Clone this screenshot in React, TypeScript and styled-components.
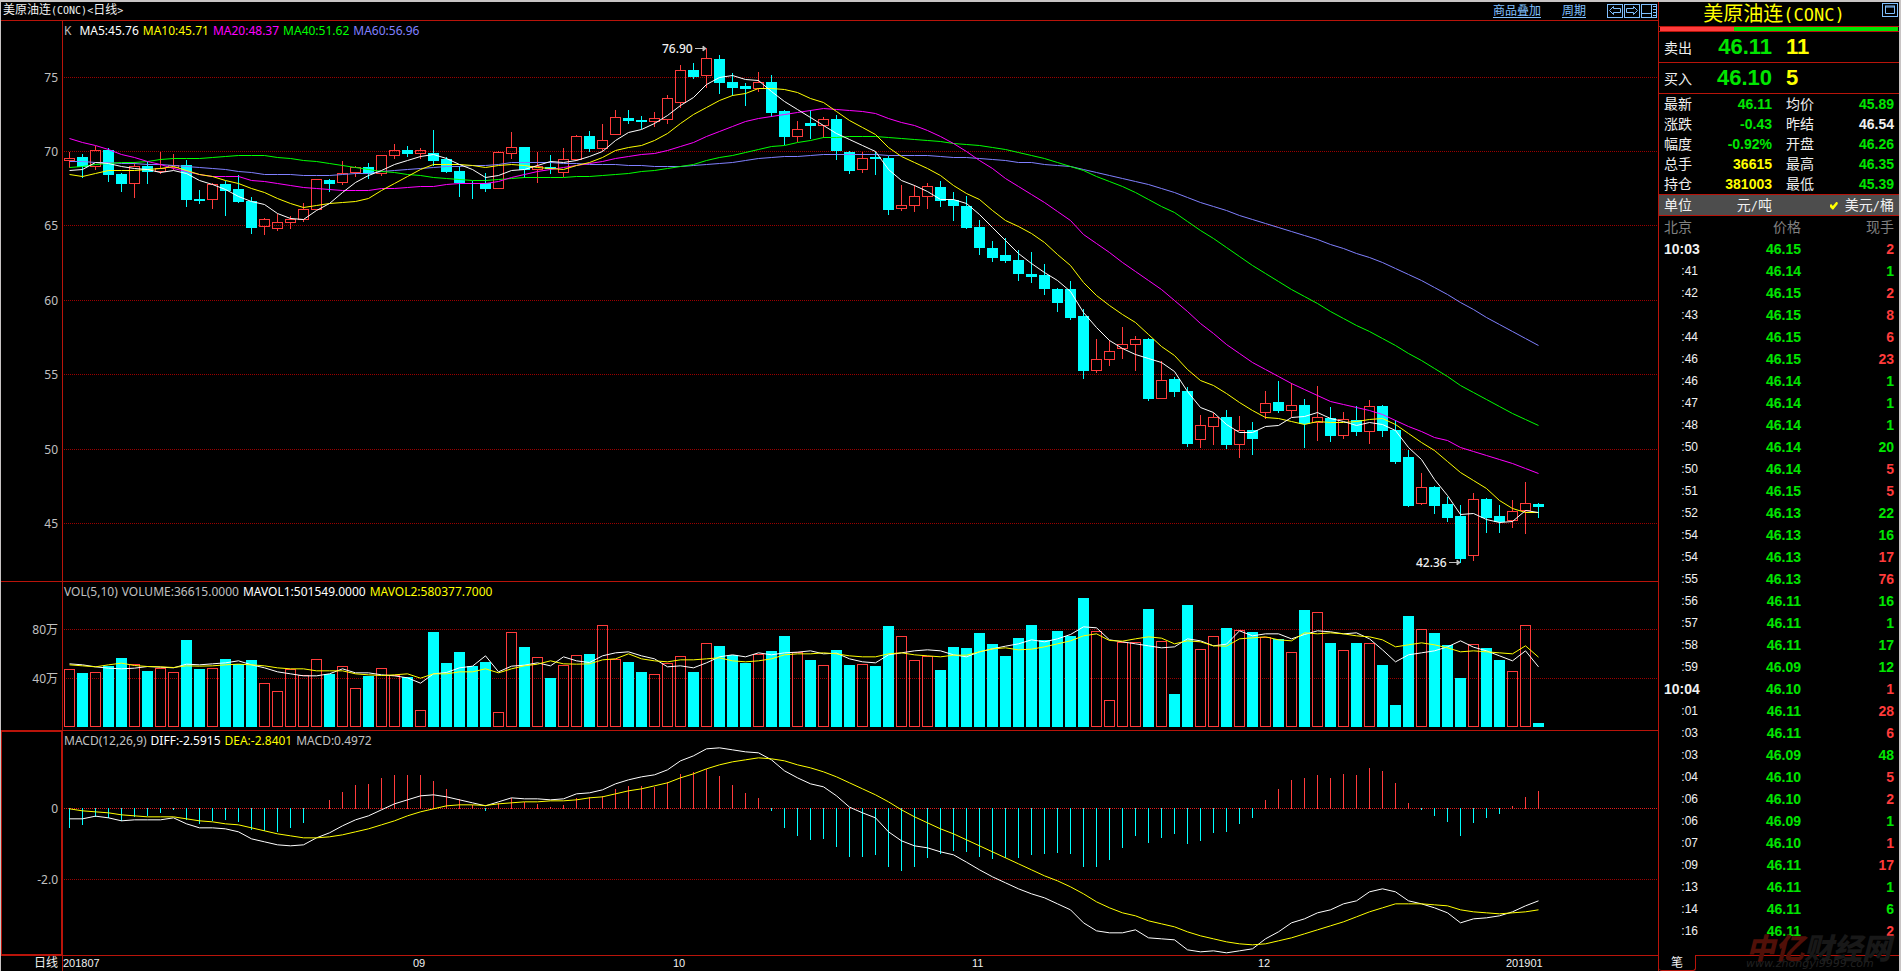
import React from "react";
import styled, { createGlobalStyle, css } from "styled-components";

const COLOR = {
  frame: "#c8c4c4",
  rule: "#b9140a",
  up: "#ff3b3b",
  down: "#00ffff",
  green: "#00e600",
  yellow: "#ffff00",
  white: "#f0f0f0",
  grey: "#c0c0c0",
  dim: "#808080",
  link: "#80c0ff",
  magenta: "#ff00ff",
  violet: "#8080ff",
  lime: "#00ff00",
};

const CJK = `"Noto Sans CJK SC", sans-serif`;
const LEGEND_FONT = `"Noto Sans", ${CJK}`;
const UI_FONT = `"Liberation Sans", ${CJK}`;

const GlobalStyle = createGlobalStyle`
  * { box-sizing: border-box; }
  body { margin: 0; background: #000; color: ${COLOR.white}; font-family: ${UI_FONT}; font-size: 12px; }
  button { margin: 0; padding: 0; border: 0; background: none; color: inherit; font: inherit; cursor: pointer; }
`;

/* ---------- chart data ---------- */

const STEP = 13;
const FIRST = 6;
const BODY = 11;

/* rising flag, high, body top, body bottom, low */
type Candle = [number, number, number, number, number];
const candles: Candle[] = [
  [1,152,158,160,167],[0,154,157,166,177],[1,146,150,166,169],[0,148,150,174,181],[0,173,174,183,191],
  [1,162,166,183,197],[0,162,166,171,183],[1,152,168,171,173],[1,154,165,167,169],[0,160,165,199,206],
  [0,190,199,200,203],[1,183,184,199,208],[0,181,184,190,215],[0,175,189,201,202],[0,197,201,227,233],
  [1,218,219,226,234],[1,214,222,228,230],[1,216,219,222,228],[1,203,209,219,221],[1,179,179,209,209],
  [0,179,180,183,191],[1,161,173,182,184],[1,166,167,172,176],[0,163,167,173,178],[1,155,155,173,175],
  [1,144,150,155,158],[0,146,150,153,156],[1,148,150,153,158],[0,130,153,160,165],[0,157,159,171,172],
  [0,166,171,182,196],[0,181,183,183,198],[0,173,183,188,191],[1,151,152,188,188],[1,132,147,153,158],
  [0,147,147,169,177],[1,152,166,169,182],[0,155,167,168,173],[1,148,159,172,176],[1,135,136,159,160],
  [0,131,136,148,151],[1,124,140,148,150],[1,110,117,134,134],[0,110,118,120,123],[0,116,120,121,128],
  [1,112,118,121,126],[1,95,98,119,123],[1,65,70,102,107],[0,63,70,76,78],[1,48,58,75,87],
  [0,55,59,82,93],[0,73,82,87,95],[0,83,86,88,105],[1,72,82,88,91],[0,75,82,112,116],
  [0,110,111,136,144],[1,121,129,136,141],[0,110,123,125,138],[1,117,119,125,137],[0,115,119,150,159],
  [0,151,152,170,173],[1,152,158,169,172],[0,152,157,158,174],[0,156,158,209,214],[1,185,205,208,210],
  [1,185,196,205,211],[1,183,186,196,208],[0,181,187,200,206],[0,192,200,205,220],[0,196,206,227,228],
  [0,220,227,247,254],[0,241,248,257,261],[0,238,255,260,262],[0,250,260,273,280],[0,252,274,276,282],
  [0,264,275,288,294],[0,288,289,302,311],[0,281,289,317,319],[0,309,316,370,378],[1,339,359,370,372],
  [1,340,351,359,365],[1,327,344,348,358],[1,336,339,344,370],[0,338,339,398,400],[1,361,380,398,398],
  [0,377,379,391,396],[0,387,391,443,446],[1,415,425,439,447],[1,413,417,426,444],[0,410,417,444,448],
  [1,416,430,444,457],[0,422,430,438,454],[1,391,403,412,418],[0,381,402,410,412],[1,383,405,410,416],
  [0,399,405,423,447],[1,386,417,422,440],[0,407,418,435,441],[1,412,419,435,438],[0,406,420,431,435],
  [1,400,406,431,443],[0,405,406,430,436],[0,420,430,461,463],[0,450,457,505,506],[1,473,487,503,504],
  [0,486,487,505,513],[0,497,504,517,521],[0,505,516,558,562],[1,493,499,555,560],[0,498,499,517,532],
  [0,505,516,521,532],[1,500,511,520,527],[1,482,503,510,533],[0,503,504,506,517],
];

const ma5 = [170,169,162,163,166,168,169,172,170,173,180,184,189,196,201,204,213,218,219,210,203,192,182,175,170,164,160,156,154,158,164,169,177,175,170,169,165,161,162,160,156,151,140,132,129,123,115,105,97,84,77,75,79,80,91,101,109,117,125,133,139,145,151,169,180,185,191,199,199,203,214,227,240,253,263,272,280,291,312,327,340,348,354,358,362,371,391,407,412,424,432,432,426,425,417,416,412,418,421,425,422,424,430,447,459,479,495,514,513,519,522,521,510,512];
const ma10 = [174,176,173,170,170,170,169,168,166,170,174,176,180,183,188,192,198,203,207,205,203,202,201,198,190,183,176,169,164,164,164,165,167,165,164,165,167,168,169,165,162,157,150,147,145,140,133,123,114,107,100,95,93,88,88,89,92,98,102,111,120,127,134,147,156,162,168,175,185,193,199,210,220,226,233,242,254,265,282,295,305,314,322,334,346,355,369,380,385,393,402,410,417,418,421,424,421,422,422,421,419,418,424,433,442,450,461,472,480,488,500,508,512,512];
const ma20 = [138,142,145,149,154,157,161,164,168,171,174,176,176,176,180,181,183,185,187,188,189,190,190,190,188,188,187,186,186,184,183,183,183,181,177,174,171,169,167,165,163,161,158,156,154,153,150,146,142,136,131,126,121,118,116,114,112,110,108,109,110,111,113,118,122,125,130,136,143,151,160,168,178,186,194,202,211,220,234,243,252,262,271,280,289,300,311,323,333,344,353,362,369,376,383,389,395,401,404,407,410,414,420,426,431,437,440,447,451,455,459,463,468,473];
const ma40 = [167,166,164,163,162,162,161,159,158,158,158,157,156,155,155,155,157,158,160,161,163,165,167,169,171,172,174,175,177,178,179,180,180,179,178,177,177,177,177,176,176,175,174,173,171,170,168,166,164,160,157,155,152,149,146,145,142,140,137,137,136,136,136,137,138,139,140,141,143,144,145,147,149,152,155,158,162,166,170,176,181,186,192,199,206,212,221,230,238,247,256,265,273,281,289,296,303,311,318,325,331,338,345,353,360,368,376,385,392,399,406,413,419,425];
const ma60 = [161,161,162,162,163,163,164,164,165,166,167,168,169,171,172,174,174,174,175,175,175,174,173,173,171,170,169,168,167,166,166,165,165,164,162,162,162,162,163,163,164,164,164,165,165,166,166,166,165,164,163,162,160,158,157,156,156,155,154,154,154,154,154,155,155,155,155,156,157,157,158,159,160,162,162,164,165,166,169,172,175,178,181,184,188,192,197,202,206,210,215,219,223,227,231,235,239,244,248,253,257,262,268,274,280,287,294,302,309,317,324,331,338,345];

/* volume and MACD series are sampled at three units per pixel */
const UNIT = 3;
const volume = [298,309,307,288,264,282,303,295,307,210,297,295,267,283,270,340,364,298,316,268,312,289,355,318,295,316,323,421,186,279,246,288,276,427,187,231,262,324,286,256,252,166,267,276,306,313,280,259,306,220,228,256,279,253,243,198,246,270,286,240,285,283,288,168,199,271,259,300,231,234,189,222,258,204,165,210,183,198,84,184,391,217,217,117,214,372,105,238,199,174,181,186,203,207,247,120,127,219,241,219,220,285,405,138,178,189,225,324,223,234,270,304,166,459];
const mavol1 = [280,283,289,293,295,293,288,290,292,281,283,280,277,271,283,292,304,310,316,316,310,295,307,307,313,316,322,338,310,306,292,287,256,304,287,284,277,286,259,271,276,256,247,244,256,265,289,286,292,277,259,253,259,247,253,247,245,241,250,248,265,274,277,253,247,241,238,241,253,259,244,235,227,220,208,214,205,192,169,172,208,214,220,226,232,229,205,211,226,221,181,196,190,190,205,192,181,184,190,187,205,238,274,253,247,241,229,211,230,241,256,271,241,289];
const mavol2 = [283,286,289,283,278,285,288,289,291,286,287,286,283,281,283,286,292,295,295,301,301,301,310,313,315,313,310,323,310,310,304,304,295,307,295,286,281,271,280,281,280,268,265,250,265,271,274,268,268,265,262,271,274,271,265,253,250,250,247,250,256,259,259,250,247,253,256,259,254,254,244,235,232,238,236,229,220,211,196,190,210,212,205,199,203,220,211,214,226,227,205,202,199,208,211,187,190,187,190,196,199,208,229,223,217,223,232,244,241,244,247,250,226,260];
const macd = [773,762,738,743,752,738,735,726,717,747,759,750,747,753,777,780,783,773,756,715,690,666,645,642,624,615,615,615,633,657,688,705,720,700,684,696,702,711,705,684,681,678,657,648,648,651,636,612,606,597,618,645,669,684,720,771,795,807,804,828,858,858,852,888,900,888,861,849,840,843,858,864,861,861,852,849,846,849,888,888,867,831,795,816,801,789,819,810,786,783,759,741,690,657,630,624,615,624,612,615,594,603,639,699,717,735,753,795,756,741,729,708,681,663];
const diff = [745,745,737,742,751,748,748,748,742,760,772,772,775,784,805,814,823,826,823,802,787,766,748,736,718,700,688,676,673,679,688,697,706,694,682,685,685,688,685,670,667,658,640,628,619,613,598,571,556,535,532,538,544,547,568,601,622,640,649,676,710,727,742,784,811,826,832,844,853,875,898,919,937,955,970,982,1000,1018,1057,1081,1087,1087,1078,1102,1105,1108,1138,1144,1141,1147,1141,1135,1105,1084,1057,1045,1027,1018,1000,991,964,955,964,991,1000,1012,1027,1057,1045,1042,1036,1024,1006,991];
const dea = [715,721,724,727,733,736,739,739,739,745,751,754,760,763,772,781,790,796,802,802,799,793,784,775,763,751,736,724,715,706,703,703,705,700,697,694,694,691,691,688,682,679,670,661,655,646,637,622,610,595,583,574,568,562,565,571,583,592,604,619,637,655,673,694,718,739,757,775,790,808,826,844,862,880,898,916,931,949,970,994,1012,1027,1036,1051,1060,1069,1084,1096,1105,1114,1120,1123,1120,1111,1102,1090,1078,1066,1054,1039,1024,1012,1000,1000,1000,1003,1006,1018,1024,1027,1030,1027,1024,1018];

const centre = (i: number) => FIRST + STEP * i;

/* ---------- frame ---------- */

const Page = styled.div`
  display: flex;
  min-height: 100vh;
  border: solid ${COLOR.frame};
  border-width: 2px 2px 0 1px;
  background: #000;
`;

const ChartArea = styled.main`
  flex: 1;
  min-width: 0;
  display: flex;
  flex-direction: column;
`;

const TopBar = styled.header`
  display: flex;
  align-items: center;
  height: 19px;
  padding: 0 1px 1px 2px;
  border-bottom: 1px solid ${COLOR.rule};
`;

const ChartTitle = styled.h1`
  flex: 1;
  margin: 0;
  font: 400 12px/16px ${UI_FONT};
  color: ${COLOR.white};
`;

const Latin = styled.span<{ $size: number }>`
  font-family: "DejaVu Sans Mono", monospace;
  font-size: ${(p) => p.$size}px;
`;

const TopLink = styled.a`
  margin-right: 21px;
  color: ${COLOR.link};
  line-height: 14px;
  text-decoration: underline;
  text-underline-offset: 2px;
`;

const IconGroup = styled.div`
  display: flex;
  gap: 1px;
`;

const IconButton = styled.button`
  display: block;
  width: 16px;
  height: 14px;
  color: ${COLOR.link};
  svg { display: block; }
`;

/* ---------- panels ---------- */

const Panel = styled.section<{ $grow?: boolean }>`
  display: flex;
  flex: ${(p) => (p.$grow ? "1 0 auto" : "none")};
  border-bottom: 1px solid ${COLOR.rule};
`;

const AxisColumn = styled.div<{ $active?: boolean }>`
  width: 62px;
  flex: none;
  border-right: 1px solid ${COLOR.rule};
  ${(p) =>
    p.$active &&
    css`
      box-shadow: inset 0 0 0 1px ${COLOR.rule};
    `}
`;

const Plot = styled.div`
  flex: 1;
  min-width: 0;
  display: grid;
  > * { grid-area: 1 / 1; }
`;

const Legend = styled.div`
  align-self: start;
  display: flex;
  gap: 4px;
  padding-left: 1px;
  font: 400 12px/20px ${LEGEND_FONT};
  white-space: nowrap;
`;

const LegendItem = styled.span<{ $color?: string; $wide?: boolean }>`
  color: ${(p) => p.$color ?? COLOR.grey};
  margin-right: ${(p) => (p.$wide ? 4 : 0)}px;
`;

const Drawing = styled.svg<{ $height: number }>`
  display: block;
  width: 100%;
  height: ${(p) => p.$height}px;
`;

const TimeBar = styled.footer`
  display: flex;
  height: 15px;
  flex: none;
`;

const PeriodLabel = styled.div`
  width: 62px;
  flex: none;
  padding-right: 4px;
  border-right: 1px solid ${COLOR.rule};
  text-align: right;
  line-height: 15px;
`;

const TimeDrawing = styled(Drawing)`
  flex: 1;
  font: 11px ${UI_FONT};
`;

type Label = { y: number; text: string };

function Axis({ height, labels, active }: { height: number; labels: Label[]; active?: boolean }) {
  return (
    <AxisColumn $active={active}>
      <Drawing $height={height} fontFamily={LEGEND_FONT} fontSize={12} fill={COLOR.grey} textAnchor="end">
        {labels.map((l) => (
          <text key={l.text} x={57} y={l.y + 5}>
            {l.text}
          </text>
        ))}
      </Drawing>
    </AxisColumn>
  );
}

function GridLine({ y, bright }: { y: number; bright?: boolean }) {
  return (
    <line x1={1} x2="100%" y1={y + 0.5} y2={y + 0.5} stroke={bright ? "#e01c1c" : "#9c0000"} strokeDasharray="1 1" />
  );
}

function Curve({ values, color, top, unit = 1 }: { values: number[]; color: string; top: number; unit?: number }) {
  const points = values.map((v, i) => `${centre(i) + 0.5},${v / unit - top + 0.5}`).join(" ");
  return <polyline points={points} fill="none" stroke={color} strokeWidth={1} />;
}

function Bar({ i, top, bottom, rising }: { i: number; top: number; bottom: number; rising: boolean }) {
  const left = centre(i) - 5;
  return rising ? (
    <rect x={left + 0.5} y={top + 0.5} width={BODY - 1} height={Math.max(bottom - top, 1)} fill="none" stroke={COLOR.up} />
  ) : (
    <rect x={left} y={top} width={BODY} height={bottom - top + 1} fill={COLOR.down} />
  );
}

function PricePanel() {
  const top = 21;
  const levels = [77, 151, 225, 300, 374, 449, 523];
  return (
    <Panel>
      <Axis height={560} labels={levels.map((y, k) => ({ y: y - top, text: String(75 - 5 * k) }))} />
      <Plot>
        <Drawing $height={560} aria-label="K">
          {levels.map((y) => (
            <GridLine key={y} y={y - top} />
          ))}
          {candles.map(([rising, high, open, close, low], i) => (
            <g key={i} fill={rising ? COLOR.up : COLOR.down}>
              <rect x={centre(i)} y={high - top} width={1} height={open - high} />
              <rect x={centre(i)} y={close - top} width={1} height={low - close + 1} />
              <Bar i={i} top={open - top} bottom={close - top} rising={rising === 1} />
            </g>
          ))}
          <Curve values={ma60} color={COLOR.violet} top={top} />
          <Curve values={ma40} color={COLOR.lime} top={top} />
          <Curve values={ma20} color={COLOR.magenta} top={top} />
          <Curve values={ma10} color={COLOR.yellow} top={top} />
          <Curve values={ma5} color="#ffffff" top={top} />
          <g fontFamily={LEGEND_FONT} fontSize={12} fontWeight={500} fill={COLOR.white}>
            <text x={599} y={32}>76.90</text>
            <text x={1353} y={546}>42.36</text>
          </g>
          <path d="M632 27.5H643M640 25V30L643 27.5ZM1386 541.5H1397M1394 539V544L1397 541.5Z" stroke={COLOR.grey} fill={COLOR.grey} />
        </Drawing>
        <Legend>
          <LegendItem $wide>K</LegendItem>
          <LegendItem $color="#ffffff">MA5:45.76</LegendItem>
          <LegendItem $color={COLOR.yellow}>MA10:45.71</LegendItem>
          <LegendItem $color={COLOR.magenta}>MA20:48.37</LegendItem>
          <LegendItem $color={COLOR.lime}>MA40:51.62</LegendItem>
          <LegendItem $color={COLOR.violet}>MA60:56.96</LegendItem>
        </Legend>
      </Plot>
    </Panel>
  );
}

function VolumePanel() {
  const top = 12;
  return (
    <Panel>
      <Axis
        height={148}
        labels={[
          { y: 47, text: "80万" },
          { y: 96, text: "40万" },
        ]}
      />
      <Plot>
        <Drawing $height={148} aria-label="VOL">
          <GridLine y={47} />
          <GridLine y={96} />
          {volume.map((v, i) => (
            <Bar key={i} i={i} top={Math.floor(v / UNIT) - top} bottom={144} rising={candles[i][0] === 1} />
          ))}
          <Curve values={mavol1} color="#ffffff" top={top} unit={UNIT} />
          <Curve values={mavol2} color={COLOR.yellow} top={top} unit={UNIT} />
        </Drawing>
        <Legend>
          <LegendItem>VOL(5,10)</LegendItem>
          <LegendItem>VOLUME:36615.0000</LegendItem>
          <LegendItem $color="#ffffff">MAVOL1:501549.0000</LegendItem>
          <LegendItem $color={COLOR.yellow}>MAVOL2:580377.7000</LegendItem>
        </Legend>
      </Plot>
    </Panel>
  );
}

function MacdPanel() {
  const top = 161;
  const zero = 77;
  return (
    <Panel $grow>
      <Axis
        active
        height={224}
        labels={[
          { y: zero, text: "0" },
          { y: 148, text: "-2.0" },
        ]}
      />
      <Plot>
        <Drawing $height={224} aria-label="MACD">
          <GridLine y={zero} bright />
          <GridLine y={148} />
          {macd.map((v, i) => {
            const tip = Math.floor(v / UNIT) - top;
            if (v === 715) return null;
            return v < 715 ? (
              <rect key={i} x={centre(i)} y={tip} width={1} height={zero - tip + 1} fill={COLOR.up} />
            ) : (
              <rect key={i} x={centre(i)} y={zero} width={1} height={tip - zero + 1} fill={COLOR.down} />
            );
          })}
          <Curve values={diff} color="#ffffff" top={top} unit={UNIT} />
          <Curve values={dea} color={COLOR.yellow} top={top} unit={UNIT} />
        </Drawing>
        <Legend>
          <LegendItem>MACD(12,26,9)</LegendItem>
          <LegendItem $color="#ffffff">DIFF:-2.5915</LegendItem>
          <LegendItem $color={COLOR.yellow}>DEA:-2.8401</LegendItem>
          <LegendItem>MACD:0.4972</LegendItem>
        </Legend>
      </Plot>
    </Panel>
  );
}

/* ---------- quote side bar ---------- */

const SideBar = styled.aside`
  position: relative;
  width: 241px;
  flex: none;
  display: flex;
  flex-direction: column;
  border-left: 1px solid ${COLOR.rule};
  font-size: 14px;
`;

const SideTitle = styled.div`
  position: relative;
  height: 25px;
  border-bottom: 1px solid ${COLOR.rule};
`;

const Instrument = styled.h2`
  margin: 0;
  padding-right: 10px;
  text-align: center;
  font: 400 20px/24px ${UI_FONT};
  color: ${COLOR.yellow};
  white-space: nowrap;
`;

const WindowButton = styled(IconButton)`
  position: absolute;
  top: 1px;
  right: 1px;
`;

const Balance = styled.div`
  display: flex;
  height: 5px;
  padding: 0 1px;
  border-bottom: 1px solid ${COLOR.rule};
`;

const BalancePart = styled.div<{ $share: number; $color: string }>`
  flex: ${(p) => p.$share};
  background: ${(p) => p.$color};
`;

const Offer = styled.div`
  display: grid;
  grid-template-columns: 28px 80px 1fr;
  align-items: center;
  height: 31px;
  padding: 0 5px;
  border-bottom: 1px solid ${COLOR.rule};
`;

const OfferPrice = styled.strong`
  text-align: right;
  font-size: 22px;
  line-height: 30px;
  color: ${COLOR.green};
`;

const OfferLots = styled(OfferPrice)`
  padding-left: 14px;
  text-align: left;
  color: ${COLOR.yellow};
`;

const StatTable = styled.table`
  width: 100%;
  border-collapse: collapse;
  table-layout: fixed;
  border-bottom: 1px solid ${COLOR.rule};
`;

const StatName = styled.th<{ $second?: boolean }>`
  width: ${(p) => (p.$second ? 42 : 33)}px;
  height: 20px;
  padding: 0 0 0 ${(p) => (p.$second ? 14 : 5)}px;
  text-align: left;
  font-weight: 400;
  line-height: 20px;
`;

const StatValue = styled.td<{ $color: string; $last?: boolean }>`
  padding: 0 ${(p) => (p.$last ? 5 : 0)}px 0 0;
  width: ${(p) => (p.$last ? "auto" : "80px")};
  text-align: right;
  font-weight: 700;
  line-height: 20px;
  color: ${(p) => p.$color};
`;

const UnitBar = styled.fieldset`
  display: grid;
  grid-template-columns: 28px 80px 1fr;
  height: 21px;
  margin: 0;
  padding: 0 5px;
  border: 0;
  border-bottom: 1px solid ${COLOR.rule};
  background: #4d4d4d;
  line-height: 20px;
`;

const UnitChoice = styled.label`
  display: flex;
  justify-content: flex-end;
  align-items: center;
  gap: 7px;
  white-space: nowrap;
`;

const UnitRadio = styled.input`
  appearance: none;
  width: 8px;
  height: 8px;
  margin: 0;
  &:checked {
    background: ${COLOR.yellow};
    clip-path: polygon(0 45%, 18% 30%, 38% 55%, 85% 0, 100% 15%, 100% 32%, 45% 100%, 32% 100%, 0 65%);
  }
`;

const TickTable = styled.table`
  width: 100%;
  border-collapse: collapse;
  table-layout: fixed;
`;

const TickHead = styled.th<{ $width?: number; $align: string }>`
  width: ${(p) => (p.$width ? `${p.$width}px` : "auto")};
  height: 22px;
  padding: 0 ${(p) => (p.$width ? 0 : 5)}px 0 ${(p) => (p.$align === "left" ? 5 : 0)}px;
  text-align: ${(p) => p.$align};
  font-weight: 400;
  line-height: 22px;
  color: ${COLOR.dim};
`;

const TickTime = styled.td<{ $minute: boolean }>`
  height: 22px;
  padding: 0 2px 0 5px;
  line-height: 22px;
  text-align: ${(p) => (p.$minute ? "left" : "right")};
  font-size: ${(p) => (p.$minute ? 14 : 12)}px;
  font-weight: ${(p) => (p.$minute ? 700 : 400)};
  white-space: nowrap;
`;

const TickCell = styled.td<{ $color: string; $last?: boolean }>`
  padding: 0 ${(p) => (p.$last ? 5 : 0)}px 0 0;
  text-align: right;
  font-weight: 700;
  line-height: 22px;
  color: ${(p) => p.$color};
`;

const TabStrip = styled.div`
  display: flex;
  height: 16px;
  margin-top: auto;
`;

const Tab = styled.button`
  width: 37px;
  border: solid ${COLOR.rule};
  border-width: 0 1px 1px 0;
  border-radius: 0 0 3px 3px;
  font-size: 12px;
  line-height: 14px;
  color: ${COLOR.white};
`;

const TabFill = styled.div`
  flex: 1;
  border-top: 1px solid ${COLOR.rule};
`;

const Watermark = styled.div`
  position: absolute;
  right: 2px;
  bottom: 3px;
  width: 151px;
  font-style: italic;
  color: #181818;
  pointer-events: none;
`;

const WatermarkName = styled.div`
  font-size: 29px;
  font-weight: 900;
  line-height: 22px;
  white-space: nowrap;
`;

const WatermarkRed = styled.span`
  color: #501008;
`;

const WatermarkSite = styled.div`
  font: italic 11px/8px "DejaVu Sans", sans-serif;
  color: #202020;
`;

const { green: G, yellow: Y, white: W, up: R } = COLOR;

const stats: [string, string, string, string, string, string][] = [
  ["最新", "46.11", G, "均价", "45.89", G],
  ["涨跌", "-0.43", G, "昨结", "46.54", W],
  ["幅度", "-0.92%", G, "开盘", "46.26", G],
  ["总手", "36615", Y, "最高", "46.35", G],
  ["持仓", "381003", Y, "最低", "45.39", G],
];

const ticks: [string, string, number, string][] = [
  ["10:03", "46.15", 2, R], [":41", "46.14", 1, G], [":42", "46.15", 2, R], [":43", "46.15", 8, R],
  [":44", "46.15", 6, R], [":46", "46.15", 23, R], [":46", "46.14", 1, G], [":47", "46.14", 1, G],
  [":48", "46.14", 1, G], [":50", "46.14", 20, G], [":50", "46.14", 5, R], [":51", "46.15", 5, R],
  [":52", "46.13", 22, G], [":54", "46.13", 16, G], [":54", "46.13", 17, R], [":55", "46.13", 76, R],
  [":56", "46.11", 16, G], [":57", "46.11", 1, G], [":58", "46.11", 17, G], [":59", "46.09", 12, G],
  ["10:04", "46.10", 1, R], [":01", "46.11", 28, R], [":03", "46.11", 6, R], [":03", "46.09", 48, G],
  [":04", "46.10", 5, R], [":06", "46.10", 2, R], [":06", "46.09", 1, G], [":07", "46.10", 1, R],
  [":09", "46.11", 17, R], [":13", "46.11", 1, G], [":14", "46.11", 6, G], [":16", "46.11", 2, R],
];

function QuoteBar() {
  return (
    <SideBar>
      <SideTitle>
        <Instrument>
          美原油连<Latin $size={17}>(CONC)</Latin>
        </Instrument>
        <WindowButton aria-label="window">
          <svg width="16" height="14" fill="none" stroke="currentColor">
            <rect x="0.5" y="0.5" width="15" height="13" />
            <path d="M3.5 3V10.5H12.5V3M3 3H13M3 4H13" />
          </svg>
        </WindowButton>
      </SideTitle>
      <Balance>
        <BalancePart $share={74} $color={COLOR.up} />
        <BalancePart $share={164} $color={COLOR.green} />
      </Balance>
      <Offer>
        <span>卖出</span>
        <OfferPrice>46.11</OfferPrice>
        <OfferLots>11</OfferLots>
      </Offer>
      <Offer>
        <span>买入</span>
        <OfferPrice>46.10</OfferPrice>
        <OfferLots>5</OfferLots>
      </Offer>
      <StatTable>
        <tbody>
          {stats.map(([a, av, ac, b, bv, bc]) => (
            <tr key={a}>
              <StatName>{a}</StatName>
              <StatValue $color={ac}>{av}</StatValue>
              <StatName $second>{b}</StatName>
              <StatValue $color={bc} $last>{bv}</StatValue>
            </tr>
          ))}
        </tbody>
      </StatTable>
      <UnitBar>
        <span>单位</span>
        <UnitChoice>
          <UnitRadio type="radio" name="unit" value="ton" />
          <span>元<Latin $size={12}>/</Latin>吨</span>
        </UnitChoice>
        <UnitChoice>
          <UnitRadio type="radio" name="unit" value="barrel" defaultChecked />
          <span>美元<Latin $size={12}>/</Latin>桶</span>
        </UnitChoice>
      </UnitBar>
      <TickTable>
        <thead>
          <tr>
            <TickHead $width={41} $align="left">北京</TickHead>
            <TickHead $width={101} $align="right">价格</TickHead>
            <TickHead $align="right">现手</TickHead>
          </tr>
        </thead>
        <tbody>
          {ticks.map(([time, price, lots, color], i) => (
            <tr key={i}>
              <TickTime $minute={time.length > 3}>{time}</TickTime>
              <TickCell $color={COLOR.green}>{price}</TickCell>
              <TickCell $color={color} $last>{lots}</TickCell>
            </tr>
          ))}
        </tbody>
      </TickTable>
      <TabStrip>
        <Tab>笔</Tab>
        <TabFill />
      </TabStrip>
      <Watermark>
        <WatermarkName>
          <WatermarkRed>中亿</WatermarkRed>财经网
        </WatermarkName>
        <WatermarkSite>www.zhongyi9999.com</WatermarkSite>
      </Watermark>
    </SideBar>
  );
}

const months: [number, string][] = [
  [0, "201807"],
  [350, "09"],
  [610, "10"],
  [909, "11"],
  [1195, "12"],
  [1443, "201901"],
];

export default function App() {
  return (
    <>
      <GlobalStyle />
      <Page>
        <ChartArea>
          <TopBar>
            <ChartTitle>
              美原油连<Latin $size={10}>(CONC)&lt;</Latin>日线<Latin $size={10}>&gt;</Latin>
            </ChartTitle>
            <TopLink href="#overlay">商品叠加</TopLink>
            <TopLink href="#period">周期</TopLink>
            <IconGroup>
              <IconButton aria-label="previous">
                <svg width="16" height="14" fill="none" stroke="currentColor">
                  <rect x="0.5" y="0.5" width="15" height="13" />
                  <path d="M2.5 6.5L6.5 2.5V4.5H13.5V8.5H6.5V10.5Z" />
                </svg>
              </IconButton>
              <IconButton aria-label="next">
                <svg width="16" height="14" fill="none" stroke="currentColor">
                  <rect x="0.5" y="0.5" width="15" height="13" />
                  <path d="M13.5 6.5L9.5 2.5V4.5H2.5V8.5H9.5V10.5Z" />
                </svg>
              </IconButton>
              <IconButton aria-label="layout">
                <svg width="16" height="14" fill="none" stroke="currentColor">
                  <rect x="0.5" y="0.5" width="15" height="13" />
                  <path d="M0 9.5H10M10.5 0V14M12 2.5H15M12 5.5H15M12 8.5H15M12 11.5H15" />
                </svg>
              </IconButton>
            </IconGroup>
          </TopBar>
          <PricePanel />
          <VolumePanel />
          <MacdPanel />
          <TimeBar>
            <PeriodLabel>日线</PeriodLabel>
            <TimeDrawing $height={15} fill={COLOR.white}>
              {months.map(([x, text]) => (
                <text key={text} x={x} y={11}>
                  {text}
                </text>
              ))}
            </TimeDrawing>
          </TimeBar>
        </ChartArea>
        <QuoteBar />
      </Page>
    </>
  );
}
